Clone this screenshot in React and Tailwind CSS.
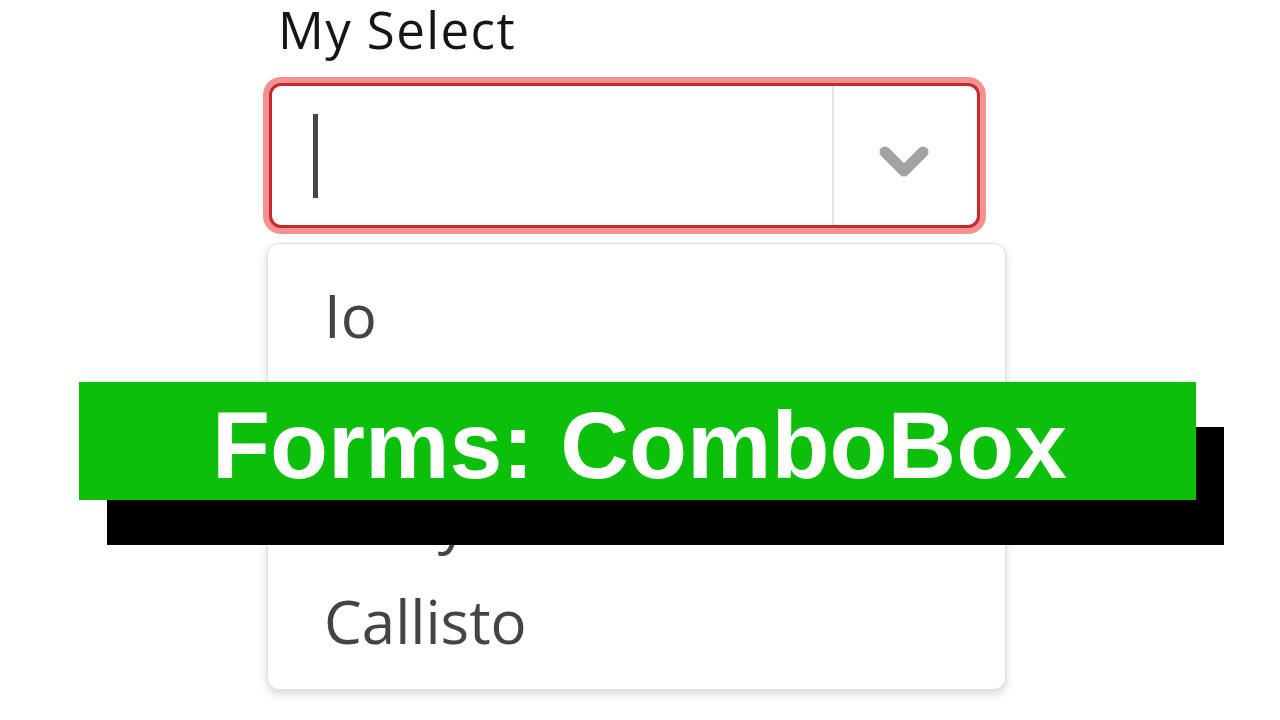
const moons = ['Io', 'Europa', 'Ganymede', 'Callisto'];

const ChevronDown = () => (
  <svg width="54" height="36" viewBox="0 0 54 36" fill="none">
    <path
      d="M8 8 L27 27 L46 8"
      stroke="#a3a3a3"
      strokeWidth="11"
      strokeLinecap="round"
      strokeLinejoin="round"
    />
  </svg>
);

const App = () => {
  return (
    <div className="relative w-[1280px] h-[720px] overflow-hidden bg-white font-['Open_Sans',sans-serif]">
      <div className="flex flex-col pl-[269px] w-[1010px]">
        {/* Label */}
        <div className="h-[83px] pl-[9px] pt-[3px]">
          <span className="block text-[51px] leading-[52px] tracking-[1.4px] text-[#161616]">My Select</span>
        </div>

        {/* Combo input */}
        <div className="flex h-[145px] w-[711px] rounded-[12px] border-[3px] border-[#c8292b] bg-white shadow-[0_0_0_6px_#f49292]">
          <div className="flex-1 flex items-center pl-[41px]">
            <div className="w-[5px] h-[84px] bg-[#454545]"></div>
          </div>
          <div className="w-[145px] border-l-2 border-[#e4e4e4] flex items-center justify-center pt-[12px] pr-[4px]">
            <ChevronDown />
          </div>
        </div>

        {/* Dropdown list */}
        <div className="mt-[15px] -ml-[2px] w-[739px] h-[447px] rounded-[12px] border border-[#dedede] bg-white shadow-[0_4px_10px_rgba(0,0,0,0.16)] py-[20px]">
          {moons.map((moon) => (
            <div key={moon} className="h-[102px] flex items-center pl-[56px]">
              <span className="text-[60px] leading-none text-[#444]">{moon}</span>
            </div>
          ))}
        </div>
      </div>

      {/* Title banner */}
      <div className="absolute left-[79px] top-[382px] w-[1117px] h-[118px] bg-[#0bbf0b] shadow-[28px_45px_0_0_#000] flex items-center justify-center pt-[8px] pl-[4px]">
        <span className="text-[95px] leading-none font-bold text-white font-['Liberation_Sans',Arial,sans-serif]">
          Forms: ComboBox
        </span>
      </div>
    </div>
  );
};

export default App;
